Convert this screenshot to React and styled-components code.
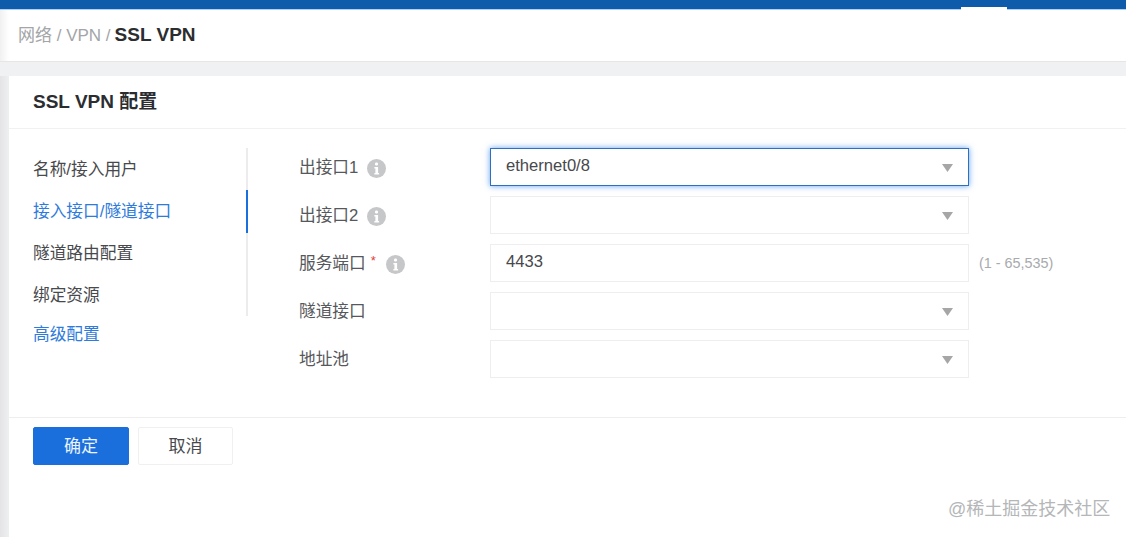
import React from "react";
import styled, { createGlobalStyle } from "styled-components";

const FONT = `"Liberation Sans", "Noto Sans CJK SC", sans-serif`;

const Global = createGlobalStyle`
  html, body { margin: 0; padding: 0; background: #fff; }
  body { font-family: ${FONT}; overflow: hidden; }
  * { box-sizing: border-box; }
`;

const Page = styled.div`
  position: relative;
  width: 1126px;
  height: 537px;
  display: flex;
  flex-direction: column;
  overflow: hidden;
  background: #fff;
`;

const TopBar = styled.div`
  height: 10px;
  flex: none;
  background: #0f5bab;
  border-bottom: 1px solid #a9d0f5;
  display: flex;
  justify-content: flex-end;
  align-items: flex-end;
  padding-right: 119px;
`;

const TopTab = styled.div`
  width: 46px;
  height: 3px;
  background: #fff;
  margin-bottom: -1px;
`;

const Breadcrumb = styled.div`
  height: 52px;
  flex: none;
  display: flex;
  align-items: baseline;
  gap: 4px;
  padding: 13px 0 0 18px;
  font-size: 17px;
  line-height: 24px;
  color: #a3a5a8;
  background: linear-gradient(90deg, #f1f1f2 0, #fff 9px);
  border-bottom: 1px solid #e6e6e6;
`;

const Current = styled.span`
  color: #2b2d30;
  font-weight: 700;
  font-size: 19px;
`;

const Gutter = styled.div`
  height: 14px;
  flex: none;
  background: #f0f1f3;
`;

const Main = styled.div`
  flex: 1;
  display: flex;
  min-height: 0;
`;

const Strip = styled.div`
  width: 9px;
  flex: none;
  background: linear-gradient(90deg, #e4e4e6, #eeeff1);
`;

const Card = styled.div`
  flex: 1;
  background: #fff;
  display: flex;
  flex-direction: column;
`;

const CardTitle = styled.div`
  height: 53px;
  flex: none;
  display: flex;
  align-items: center;
  padding: 0 0 5px 24px;
  font-size: 19px;
  font-weight: 700;
  color: #2b2d30;
  border-bottom: 1px solid #f1f1f1;
`;

const Body = styled.div`
  height: 289px;
  flex: none;
  display: flex;
  padding-top: 19px;
  border-bottom: 1px solid #eeeeee;
`;

const Nav = styled.div`
  width: 239px;
  flex: none;
  padding-left: 24px;
`;

const NavRail = styled.div`
  height: 168px;
  border-right: 2px solid #ececee;
`;

const NavItem = styled.div`
  position: relative;
  height: 42px;
  display: flex;
  align-items: center;
  padding-bottom: 3px;
  font-size: 16.7px;
  white-space: nowrap;
  color: ${(p) => (p.$link ? "#2f7bdc" : "#47494c")};
  margin-right: -2px;
  &::after {
    content: "";
    display: ${(p) => (p.$active ? "block" : "none")};
    position: absolute;
    right: 0;
    top: 0;
    width: 2px;
    height: 43px;
    background: #1a6fdc;
  }
`;

const NavExtra = styled(NavItem)`
  height: 36px;
`;

const Form = styled.div`
  margin-left: 51px;
  display: flex;
  flex-direction: column;
  gap: 10px;
`;

const Row = styled.div`
  display: flex;
  align-items: center;
  height: 38px;
`;

const Label = styled.div`
  width: 191px;
  flex: none;
  display: flex;
  align-items: center;
  font-size: 16.7px;
  color: #56585b;
`;

const LabelText = styled.span`
  margin-top: -3px;
`;

const Required = styled.span`
  color: #e0403a;
  font-size: 13px;
  margin: -6px 0 0 5px;
`;

const InfoIcon = styled.svg`
  width: 19px;
  height: 19px;
  margin-left: ${(p) => (p.$wide ? "10px" : "9px")};
  margin-top: 3px;
`;

const Field = styled.div`
  width: 479px;
  height: 38px;
  flex: none;
  display: flex;
  align-items: center;
  justify-content: space-between;
  padding: 0 15px 2px;
  background: #fff;
  font-size: 16.6px;
  color: #47494c;
  border: 1px solid ${(p) => (p.$focus ? "#2f6fc0" : "#eeeeef")};
  box-shadow: ${(p) => (p.$focus ? "0 0 6px rgba(40,130,240,.75)" : "none")};
`;

const Caret = styled.svg`
  width: 11px;
  height: 8px;
  margin-top: 3px;
  fill: #a6a6a6;
`;

const Hint = styled.div`
  margin-left: 10px;
  font-size: 14.4px;
  color: #a8aaad;
`;

const Footer = styled.div`
  display: flex;
  gap: 9px;
  padding: 9px 0 0 24px;
`;

const Button = styled.button`
  height: 38px;
  width: ${(p) => (p.$primary ? "96px" : "95px")};
  font-family: ${FONT};
  font-size: 17px;
  border-radius: 2px;
  padding: 0 0 3px;
  color: ${(p) => (p.$primary ? "#eaf3ff" : "#47494c")};
  background: ${(p) => (p.$primary ? "#1a6fdc" : "#fff")};
  border: 1px solid ${(p) => (p.$primary ? "#1a6fdc" : "#f0f0f0")};
`;

const Watermark = styled.div`
  position: absolute;
  left: 948px;
  top: 499px;
  font-size: 18px;
  line-height: 20px;
  color: #b4b6b8;
  white-space: nowrap;
`;

const Info = ({ wide }) => (
  <InfoIcon $wide={wide} viewBox="0 0 19 19">
    <circle cx="9.5" cy="9.5" r="9.5" fill="#c6c7c8" />
    <rect x="8" y="3.5" width="3" height="3" rx="1.2" fill="#fff" />
    <path d="M7.4 8h3.7v6h1v1.4H7.4V14h1v-4.6h-1z" fill="#fff" />
  </InfoIcon>
);

const Arrow = () => (
  <Caret viewBox="0 0 11 8">
    <path d="M0 0h11L5.5 8z" />
  </Caret>
);

const rows = [
  { label: "出接口1", value: "ethernet0/8", select: true, focus: true, info: true },
  { label: "出接口2", select: true, info: true },
  { label: "服务端口", value: "4433", required: true, info: true, hint: "(1 - 65,535)" },
  { label: "隧道接口", select: true },
  { label: "地址池", select: true },
];

export default function App() {
  return (
    <Page>
      <Global />
      <TopBar>
        <TopTab />
      </TopBar>
      <Breadcrumb>
        <span>网络 / VPN /</span>
        <Current>SSL VPN</Current>
      </Breadcrumb>
      <Gutter />
      <Main>
        <Strip />
        <Card>
          <CardTitle>SSL VPN 配置</CardTitle>
          <Body>
            <Nav>
              <NavRail>
                <NavItem>名称/接入用户</NavItem>
                <NavItem $link $active>接入接口/隧道接口</NavItem>
                <NavItem>隧道路由配置</NavItem>
                <NavItem>绑定资源</NavItem>
              </NavRail>
              <NavExtra $link>高级配置</NavExtra>
            </Nav>
            <Form>
              {rows.map((r) => (
                <Row key={r.label}>
                  <Label>
                    <LabelText>{r.label}</LabelText>
                    {r.required && <Required>*</Required>}
                    {r.info && <Info wide={r.required} />}
                  </Label>
                  <Field $focus={r.focus}>
                    <span>{r.value}</span>
                    {r.select && <Arrow />}
                  </Field>
                  {r.hint && <Hint>{r.hint}</Hint>}
                </Row>
              ))}
            </Form>
          </Body>
          <Footer>
            <Button $primary>确定</Button>
            <Button>取消</Button>
          </Footer>
        </Card>
      </Main>
      <Watermark>@稀土掘金技术社区</Watermark>
    </Page>
  );
}
